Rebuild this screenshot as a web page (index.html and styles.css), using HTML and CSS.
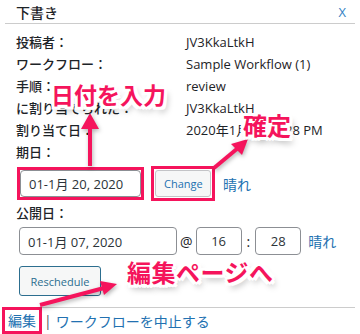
FILE: index.html
```html
<!DOCTYPE html>
<html lang="ja">
<head>
    <meta charset="UTF-8">
    <meta name="viewport" content="width=device-width, initial-scale=1.0">
    <title>下書き</title>
    <link rel="stylesheet" href="styles.css">
</head>
<body>
    <div class="panel">
        <div class="head">
            <span class="title">下書き</span>
            <a class="close" href="#">X</a>
        </div>

        <div class="body">
            <div class="meta">
                <div class="label">投稿者：</div>
                <div class="value">JV3KkaLtkH</div>
                <div class="label">ワークフロー：</div>
                <div class="value">Sample Workflow (1)</div>
                <div class="label">手順：</div>
                <div class="value">review</div>
                <div class="label">に割り当てられた：</div>
                <div class="value">JV3KkaLtkH</div>
                <div class="label">割り当て日：</div>
                <div class="value">2020年1月 07, 4:28 PM</div>
            </div>

            <div class="label line">期日：</div>
            <div class="date-row">
                <span class="hot">
                    <input class="field date-short" type="text" value="01-1月 20, 2020">
                </span>
                <span class="hot pad">
                    <button class="btn change">Change</button>
                </span>
                <a class="link" href="#">晴れ</a>
            </div>

            <div class="label line pub">公開日：</div>
            <div class="date-row tight">
                <input class="field date-long" type="text" value="01-1月 07, 2020">
                <span class="sep">@</span>
                <input class="field time" type="text" value="16">
                <span class="sep colon">:</span>
                <input class="field time" type="text" value="28">
                <a class="link" href="#">晴れ</a>
            </div>

            <button class="btn resched">Reschedule</button>
        </div>

        <div class="foot">
            <a class="link hot-box" href="#">編集</a>
            <span class="bar">|</span>
            <a class="link" href="#">ワークフローを中止する</a>
        </div>

        <!-- annotations drawn over the screenshot -->
        <svg class="arrows" width="360" height="334" viewBox="0 0 360 334">
            <g fill="#f5145c" stroke="#f5145c" stroke-width="4" stroke-linecap="butt">
                <line x1="90" y1="166" x2="90" y2="126"/>
                <polygon stroke="none" points="90,113 99,129 81,129"/>
                <line x1="214" y1="168" x2="238" y2="148"/>
                <polygon stroke="none" points="248,139 242,155 231,144"/>
                <line x1="40" y1="305" x2="104" y2="288"/>
                <polygon stroke="none" points="117,284 104,295 100,281"/>
            </g>
        </svg>
        <span class="note n-date">日付を入力</span>
        <span class="note n-ok">確定</span>
        <span class="note n-edit">編集ページへ</span>
    </div>
</body>
</html>
```

FILE: styles.css
```css
body {
    margin: 0;
    background: #fff;
    font-family: 'Open Sans', 'Noto Sans CJK JP', sans-serif;
    color: #1d2327;
}

.panel {
    position: relative;
    width: 360px;
    height: 334px;
    overflow: hidden;
    background: #fff;
}

.head {
    display: flex;
    align-items: center;
    justify-content: space-between;
    height: 23px;
    margin: 0 5px;
    padding: 0 9px 0 11px;
    border-bottom: 1px solid #ccc;
}

.title {
    font-size: 14px;
    font-weight: 500;
    color: #1d2327;
}

.close {
    font-size: 13px;
    color: #3582c4;
    text-decoration: none;
}

.body {
    padding: 7px 0 0 16px;
}

.meta {
    display: grid;
    grid-template-columns: 170px 1fr;
    line-height: 22px;
    font-size: 13px;
}

.label {
    font-weight: 500;
    font-size: 13px;
}

.value {
    color: #1d2327;
}

.line {
    line-height: 22px;
}

.pub {
    margin-top: 1px;
}

.date-row {
    display: flex;
    align-items: center;
    margin: 3px 0 0 1px;
    gap: 7px;
}

.date-row > .link {
    margin-left: 1px;
}

.date-row.tight {
    margin: 3px 0 0 3px;
    gap: 3px;
}

.tight .link {
    margin-left: 4px;
}

.hot {
    display: flex;
    border: 3px solid #f5145c;
}

.hot.pad {
    padding: 1px;
}

.field {
    box-sizing: border-box;
    height: 27px;
    padding: 0 8px;
    border: 1px solid #8c8f94;
    border-radius: 4px;
    font-family: 'Open Sans', 'Noto Sans CJK JP', sans-serif;
    font-size: 13px;
    color: #2c3338;
    background: #fff;
}

.date-short {
    width: 121px;
}

.date-long {
    width: 158px;
    height: 28px;
}

.time {
    width: 46px;
    height: 28px;
    text-align: center;
}

.sep {
    font-size: 14px;
    color: #1d2327;
}

.colon {
    margin: 0 2px;
}

.btn {
    box-sizing: border-box;
    height: 27px;
    padding: 0 8px;
    border: 1px solid #c3c4c7;
    border-radius: 3px;
    background: #f6f7f7;
    font-family: 'Open Sans', sans-serif;
    font-size: 11px;
    color: #2271b1;
}

.change {
    width: 56px;
}

.resched {
    display: block;
    width: 82px;
    height: 30px;
    margin: 11px 0 0 3px;
    border-color: #2c6e8f;
    color: #2c6e8f;
}

.link {
    font-size: 14px;
    color: #2271b1;
    text-decoration: none;
}

.foot {
    display: flex;
    align-items: center;
    gap: 4px;
    height: 25px;
    margin: 11px 5px 0;
    padding-left: 3px;
    border-top: 1px solid #ccc;
    font-size: 14px;
}

.hot-box {
    padding: 0 3px;
    margin-left: -3px;
    outline: 3px solid #f5145c;
    outline-offset: 0;
    line-height: 21px;
}

.bar {
    color: #50575e;
    margin-left: 1px;
}

.arrows {
    position: absolute;
    left: 0;
    top: 0;
    filter: drop-shadow(1px 2px 2px rgba(0,0,0,0.3));
}

.note {
    position: absolute;
    line-height: 1;
    font-family: 'Noto Sans CJK JP', sans-serif;
    font-weight: 700;
    color: #f5145c;
    white-space: nowrap;
    text-shadow:
        2px 0 #fff, -2px 0 #fff, 0 2px #fff, 0 -2px #fff,
        2px 2px #fff, -2px -2px #fff, 2px -2px #fff, -2px 2px #fff,
        3px 0 #fff, -3px 0 #fff, 0 3px #fff, 0 -3px #fff,
        3px 3px #fff, -3px -3px #fff, 3px -3px #fff, -3px 3px #fff,
        3px 5px 6px rgba(0,0,0,0.35);
}

.n-date {
    left: 51px;
    top: 83px;
    font-size: 23px;
}

.n-ok {
    left: 243px;
    top: 113px;
    font-size: 24px;
}

.n-edit {
    left: 127px;
    top: 260px;
    font-size: 24px;
    letter-spacing: 0.5px;
}
```
